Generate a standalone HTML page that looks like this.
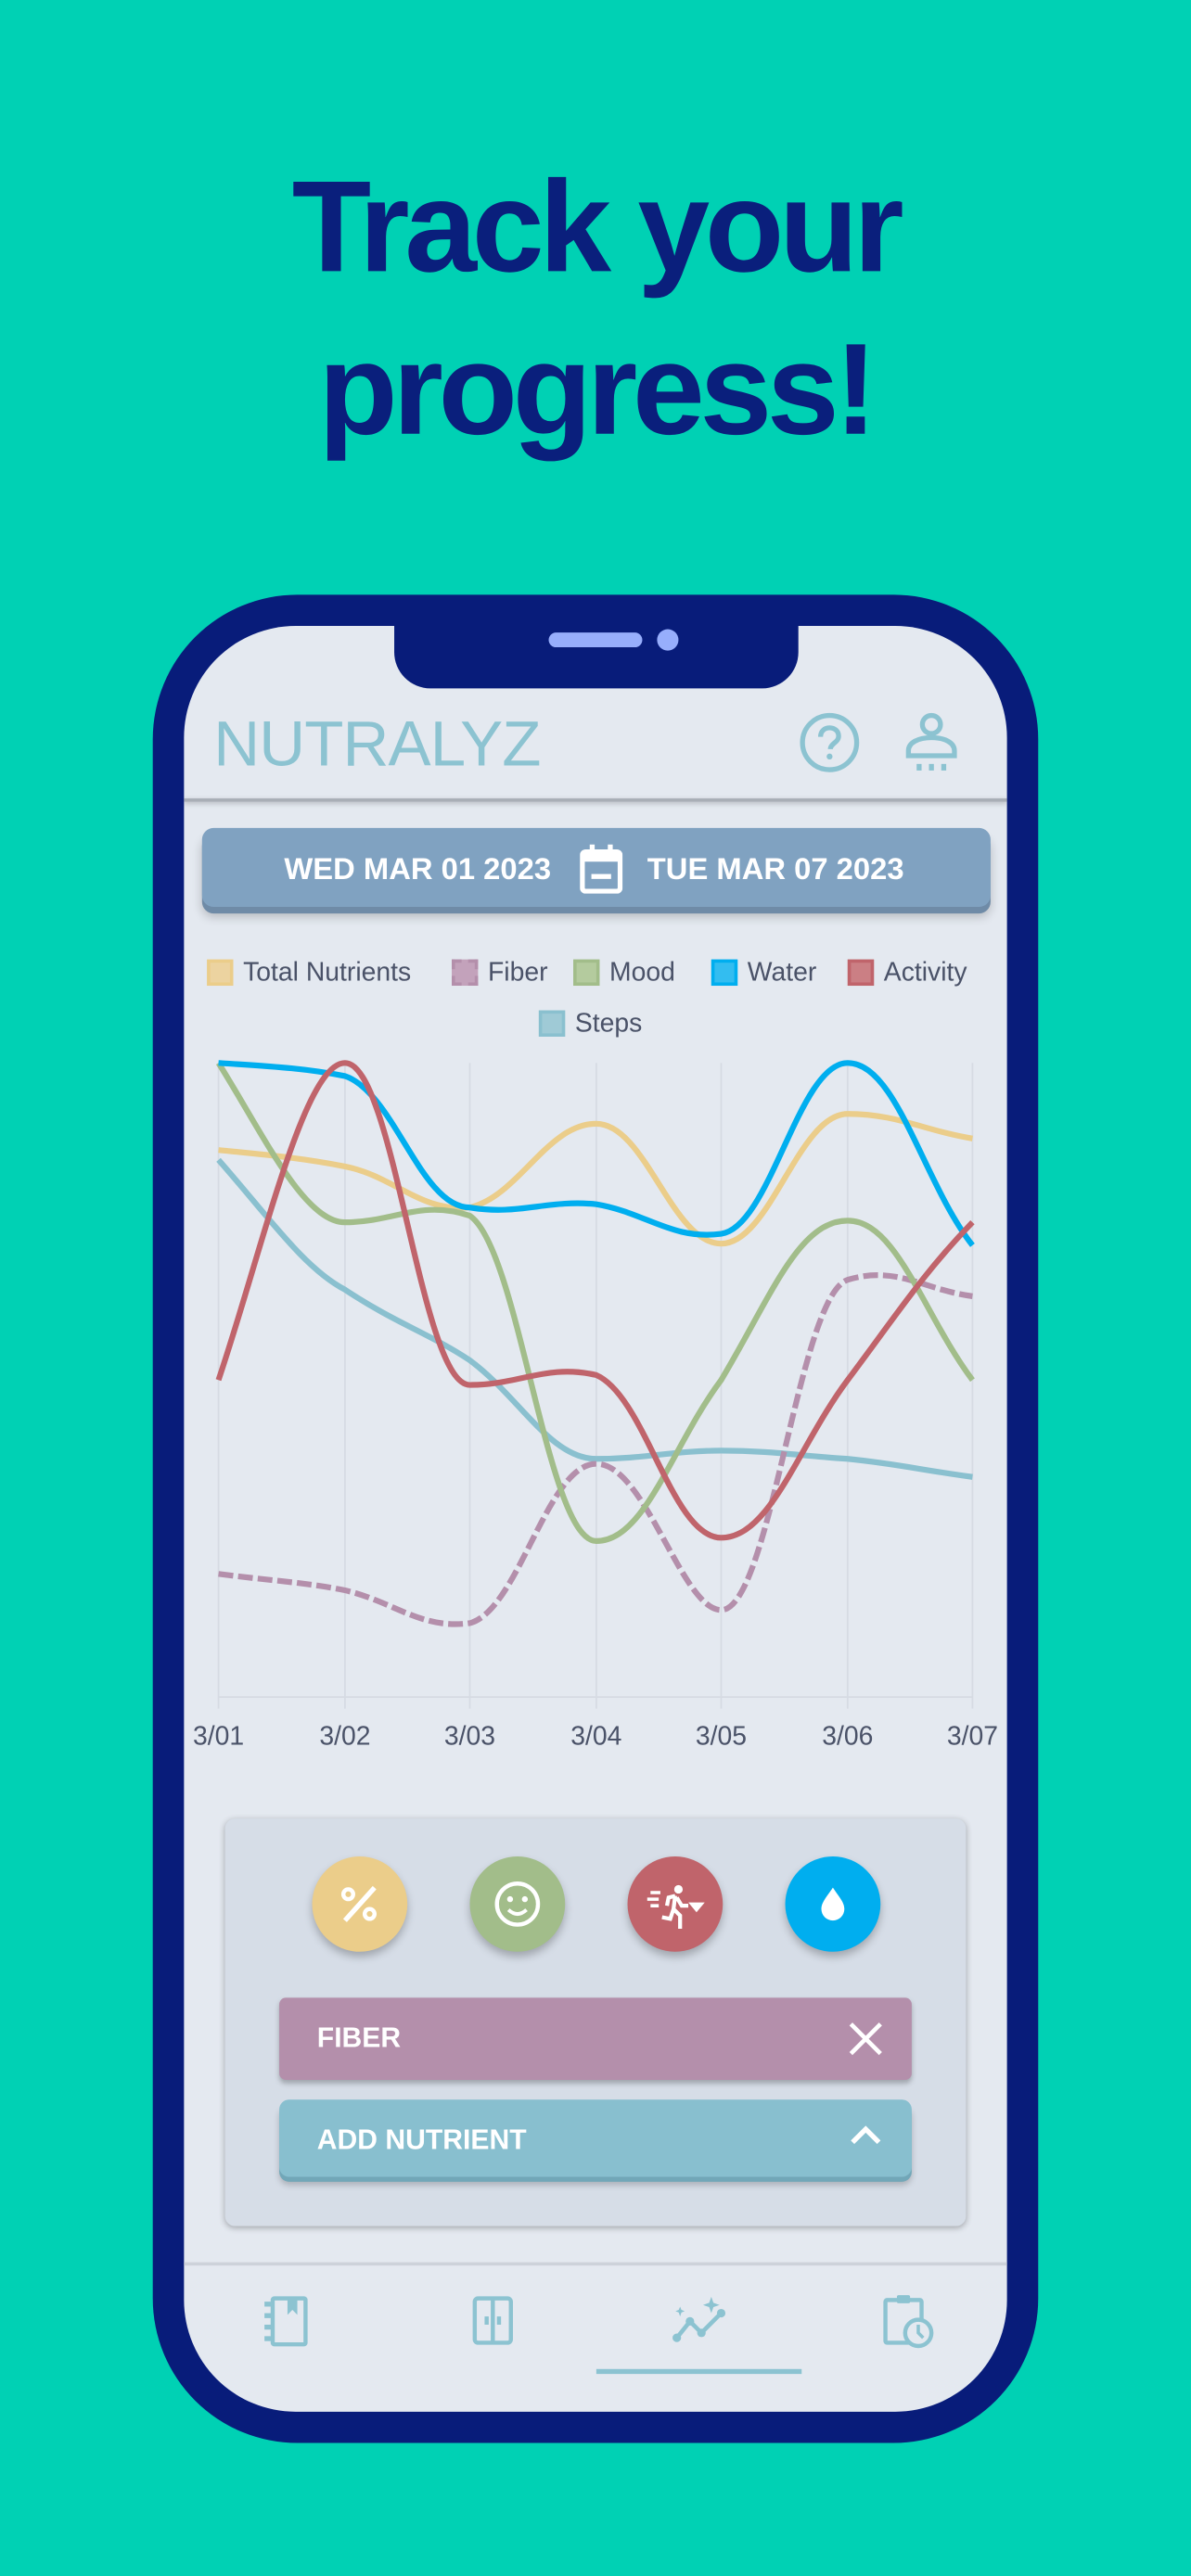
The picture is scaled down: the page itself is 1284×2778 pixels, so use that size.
<!DOCTYPE html>
<html><head><meta charset="utf-8"><style>
html,body{margin:0;padding:0;}
body{width:1284px;height:2778px;overflow:hidden;background:#00d1b4;}
#w{position:absolute;left:0;top:0;width:725px;height:1568px;transform-origin:0 0;transform:scale(1.7710,1.7717);font-family:"Liberation Sans",sans-serif;}
.abs{position:absolute;}
.title{position:absolute;left:0;width:725px;text-align:center;font-weight:bold;color:#0a1f7c;font-size:79px;letter-spacing:-3px;line-height:1;}
.leg{position:absolute;font-size:16px;color:#4a5268;white-space:nowrap;}
.sw{display:inline-block;width:16px;height:16px;vertical-align:-3px;margin-right:6px;box-sizing:border-box;border:2px solid;}
.xl{position:absolute;top:1049px;font-size:16px;color:#4a5268;width:40px;margin-left:-20px;text-align:center;}
.circ{position:absolute;width:58px;height:58px;border-radius:50%;top:1130px;box-shadow:0 3px 5px rgba(0,0,0,.25);}
</style></head><body><div id="w">
<div class="title" style="top:98px;">Track your</div>
<div class="title" style="top:197px;">progress!</div>

<div class="abs" style="left:93px;top:362px;width:539px;height:1125px;background:#081c7a;border-radius:88px;"></div>
<div class="abs" style="left:112px;top:381px;width:501px;height:1087px;background:#e4e9f0;border-radius:68px;overflow:hidden;">
  <div class="abs" style="left:18px;top:51px;font-size:39px;color:#8cc3d1;letter-spacing:-0.5px;">NUTRALYZ</div>
  <svg class="abs" style="left:374px;top:52px" width="38" height="38" viewBox="0 0 38 38"><circle cx="19" cy="19" r="16.5" fill="none" stroke="#8cc3d1" stroke-width="3"/><path d="M13.5 15.5c0-3.5 2.5-5.5 5.5-5.5s5.5 2 5.5 5c0 4-5 4.5-5 8" fill="none" stroke="#8cc3d1" stroke-width="3"/><circle cx="19" cy="27.5" r="1.8" fill="#8cc3d1"/></svg>
  <svg class="abs" style="left:438px;top:52px" width="34" height="38" viewBox="0 0 34 38"><circle cx="17" cy="8" r="5.5" fill="none" stroke="#8cc3d1" stroke-width="3"/><path d="M3 27v-3c0-5 6-8 14-8s14 3 14 8v3z" fill="none" stroke="#8cc3d1" stroke-width="3"/><rect x="8" y="32" width="3" height="4" fill="#8cc3d1"/><rect x="15.5" y="32" width="3" height="4" fill="#8cc3d1"/><rect x="23" y="32" width="3" height="4" fill="#8cc3d1"/></svg>
  <div class="abs" style="left:0;top:105px;width:501px;height:2px;background:#a9aeb6;box-shadow:0 1px 3px rgba(0,0,0,.25);"></div>
  <div class="abs" style="left:11px;top:123px;width:480px;height:48px;background:#80a2c1;border-radius:7px;box-shadow:0 4px 0 #6f8ba7,0 6px 6px rgba(0,0,0,.2);color:#fff;font-size:18.5px;font-weight:bold;">
    <span class="abs" style="left:50px;top:14px;">WED MAR 01 2023</span>
    <svg class="abs" style="left:230px;top:10px" width="26" height="30" viewBox="0 0 26 30"><rect x="1.5" y="4.5" width="23" height="24" rx="2" fill="none" stroke="#fff" stroke-width="3"/><rect x="1.5" y="4.5" width="23" height="6" fill="#fff"/><rect x="6" y="0" width="3" height="6" fill="#fff"/><rect x="17" y="0" width="3" height="6" fill="#fff"/><rect x="7" y="18" width="12" height="3" fill="#fff"/></svg>
    <span class="abs" style="left:271px;top:14px;">TUE MAR 07 2023</span>
  </div>
  <div class="leg" style="left:14px;top:203px;"><span class="sw" style="background:#ecd3a0;border-color:#ebcd8a"></span>Total Nutrients</div>
  <div class="leg" style="left:163px;top:203px;"><span class="sw" style="background:#c3a2bb;border-color:#b48fab;border-style:dashed"></span>Fiber</div>
  <div class="leg" style="left:237px;top:203px;"><span class="sw" style="background:#b4cb9e;border-color:#a2bd8a"></span>Mood</div>
  <div class="leg" style="left:321px;top:203px;"><span class="sw" style="background:#33bdf0;border-color:#00aeef"></span>Water</div>
  <div class="leg" style="left:404px;top:203px;"><span class="sw" style="background:#cb7f84;border-color:#c0646b"></span>Activity</div>
  <div class="leg" style="left:216px;top:234px;"><span class="sw" style="background:#9fcad6;border-color:#8ac0cf"></span>Steps</div>
</div>
<div class="abs" style="left:240px;top:370px;width:246px;height:49px;background:#081c7a;border-radius:0 0 22px 22px;"></div>
<div class="abs" style="left:334px;top:385px;width:57px;height:9px;background:#97aefc;border-radius:5px;"></div>
<div class="abs" style="left:400px;top:383px;width:13px;height:13px;background:#97aefc;border-radius:50%;"></div>

<svg class="abs" style="left:0;top:0" width="725" height="1568" viewBox="0 0 725 1568">
<g stroke="#d6dbe3" stroke-width="1">
<line x1="133" y1="647" x2="133" y2="1040"/><line x1="210" y1="647" x2="210" y2="1040"/><line x1="286" y1="647" x2="286" y2="1040"/><line x1="363" y1="647" x2="363" y2="1040"/><line x1="439" y1="647" x2="439" y2="1040"/><line x1="516" y1="647" x2="516" y2="1040"/><line x1="592" y1="647" x2="592" y2="1040"/>
<line x1="133" y1="1033" x2="592" y2="1033"/></g>
<g fill="none" stroke-width="3.5" stroke-linecap="butt">
<path stroke="#8ac0cf" d="M133,706 C163,740 185,772 210,785 C240,805 262,812 286,828 C316,850 335,888 363,888 C393,888 409,883 439,883 C469,883 486,886 516,888 C546,891 562,895 592,899"/>
<path stroke="#ebcd8a" d="M133,700 C163,703 185,705 210,710 C240,716 256,738 286,735 C316,728 333,684 363,684 C393,684 409,757 439,757 C469,757 486,678 516,678 C546,678 562,688 592,693"/>
<path stroke="#b48fab" stroke-dasharray="9,3" d="M133,958 C163,962 185,963 210,968 C240,975 256,992 286,988 C316,980 333,891 363,891 C393,891 415,980 439,980 C469,980 486,789 516,779 C546,770 562,785 592,789"/>
<path stroke="#a2bd8a" d="M133,647 C160,690 185,744 210,744 C240,744 256,730 286,740 C316,760 333,938 363,938 C393,938 409,880 439,840 C469,790 486,743 516,743 C546,743 562,800 592,840"/>
<path stroke="#00aeef" d="M133,647 C163,649 185,650 210,655 C240,665 256,735 286,735 C316,740 333,730 363,733 C393,738 409,755 439,751 C469,747 486,647 516,647 C546,647 562,720 592,758"/>
<path stroke="#c0646b" d="M133,840 C160,760 185,647 210,647 C240,647 256,843 286,843 C316,843 333,830 363,837 C393,850 409,936 439,936 C469,936 486,880 516,840 C546,800 562,775 592,744"/>
</g></svg>
<div class="xl" style="left:133px;">3/01</div><div class="xl" style="left:210px;">3/02</div><div class="xl" style="left:286px;">3/03</div><div class="xl" style="left:363px;">3/04</div><div class="xl" style="left:439px;">3/05</div><div class="xl" style="left:516px;">3/06</div><div class="xl" style="left:592px;">3/07</div>

<div class="abs" style="left:137px;top:1107px;width:451px;height:248px;background:#d6dde7;border-radius:6px;box-shadow:0 1px 4px rgba(0,0,0,.3);"></div>
<div class="circ" style="left:190px;background:#ebcd8a;"><svg width="58" height="58" viewBox="0 0 58 58"><circle cx="22" cy="23" r="3" fill="none" stroke="#fff" stroke-width="2.5"/><circle cx="35" cy="35" r="3" fill="none" stroke="#fff" stroke-width="2.5"/><line x1="20" y1="39" x2="38" y2="19" stroke="#fff" stroke-width="3"/></svg></div>
<div class="circ" style="left:286px;background:#a2bd8a;"><svg width="58" height="58" viewBox="0 0 58 58"><circle cx="29" cy="29" r="12.5" fill="none" stroke="#fff" stroke-width="2.5"/><circle cx="24.5" cy="26" r="1.8" fill="#fff"/><circle cx="33.5" cy="26" r="1.8" fill="#fff"/><path d="M23.5 32.5q5.5 5 11 0" fill="none" stroke="#fff" stroke-width="2.2"/></svg></div>
<div class="circ" style="left:382px;background:#c0646b;"><svg width="58" height="58" viewBox="0 0 58 58"><circle cx="31" cy="20" r="2.6" fill="#fff"/><path d="M14 22h6M12 26h7M14 30h5" stroke="#fff" stroke-width="2"/><path d="M29 24l-4 1 -1 5M29 24l-1 8 4 4v8M28 32l-2 6-5-1M30 25l3 5 4 0" fill="none" stroke="#fff" stroke-width="2.4"/><path d="M37 28h10l-5 6z" fill="#fff"/></svg></div>
<div class="circ" style="left:478px;background:#00aeef;"><svg width="58" height="58" viewBox="0 0 58 58"><path d="M29 19c-4 6-7 9-7 13a7 7 0 0 0 14 0c0-4-3-7-7-13z" fill="#fff"/></svg></div>
<div class="abs" style="left:170px;top:1216px;width:385px;height:50px;background:#b48fab;border-radius:4px;box-shadow:0 2px 3px rgba(0,0,0,.25);color:#fff;font-size:17px;font-weight:bold;"><span class="abs" style="left:23px;top:15px;">FIBER</span><svg class="abs" style="left:345px;top:13px" width="24" height="24" viewBox="0 0 24 24"><path d="M3 3L21 21M21 3L3 21" stroke="#fff" stroke-width="2.6"/></svg></div>
<div class="abs" style="left:170px;top:1278px;width:385px;height:47px;background:#88bfcf;border-radius:6px;box-shadow:0 3px 0 #72a7b8,0 5px 4px rgba(0,0,0,.2);color:#fff;font-size:17px;font-weight:bold;"><span class="abs" style="left:23px;top:15px;">ADD NUTRIENT</span><svg class="abs" style="left:347px;top:15px" width="20" height="14" viewBox="0 0 20 14"><path d="M2 11L10 3 18 11" fill="none" stroke="#fff" stroke-width="3"/></svg></div>

<div class="abs" style="left:112px;top:1377px;width:501px;height:2px;background:#cdd2da;"></div>
<svg class="abs" style="left:160px;top:1397px" width="28" height="32" viewBox="0 0 28 32"><rect x="6" y="2" width="20" height="28" rx="1" fill="none" stroke="#8cc3d1" stroke-width="2.5"/><path d="M15 3v9l3-3 3 3V3" fill="#8cc3d1"/><rect x="1" y="4" width="4" height="3" fill="#8cc3d1"/><rect x="1" y="11" width="4" height="3" fill="#8cc3d1"/><rect x="1" y="18" width="4" height="3" fill="#8cc3d1"/><rect x="1" y="25" width="4" height="3" fill="#8cc3d1"/></svg>
<svg class="abs" style="left:287px;top:1397px" width="26" height="32" viewBox="0 0 26 32"><rect x="2" y="2" width="22" height="27" rx="2" fill="none" stroke="#8cc3d1" stroke-width="2.5"/><line x1="13" y1="2" x2="13" y2="29" stroke="#8cc3d1" stroke-width="2.5"/><rect x="8" y="13" width="2.5" height="5" fill="#8cc3d1"/><rect x="15.5" y="13" width="2.5" height="5" fill="#8cc3d1"/></svg>
<svg class="abs" style="left:408px;top:1397px" width="36" height="30" viewBox="0 0 36 30"><path d="M4 26l8-10 7 7 12-12" fill="none" stroke="#8cc3d1" stroke-width="2.6"/><circle cx="4" cy="26" r="2.6" fill="#8cc3d1"/><circle cx="12" cy="16" r="2.6" fill="#8cc3d1"/><circle cx="19" cy="23" r="2.6" fill="#8cc3d1"/><circle cx="31" cy="11" r="2.6" fill="#8cc3d1"/><path d="M25 1l1.3 3.7L30 6l-3.7 1.3L25 11l-1.3-3.7L20 6l3.7-1.3z" fill="#8cc3d1"/><path d="M6 7l.8 2 2 .8-2 .8L6 13l-.8-2.4-2-.8 2-.8z" fill="#8cc3d1"/></svg>
<svg class="abs" style="left:537px;top:1396px" width="32" height="34" viewBox="0 0 32 34"><rect x="2" y="4" width="22" height="26" rx="1" fill="none" stroke="#8cc3d1" stroke-width="2.5"/><rect x="9" y="1" width="8" height="5" rx="1" fill="#8cc3d1"/><circle cx="22" cy="24" r="8" fill="#e4e9f0" stroke="#8cc3d1" stroke-width="2.5"/><path d="M22 19v5l3 3" fill="none" stroke="#8cc3d1" stroke-width="2"/></svg>
<div class="abs" style="left:363px;top:1442px;width:125px;height:3px;background:#8cc3d1;"></div>
</div></body></html>
